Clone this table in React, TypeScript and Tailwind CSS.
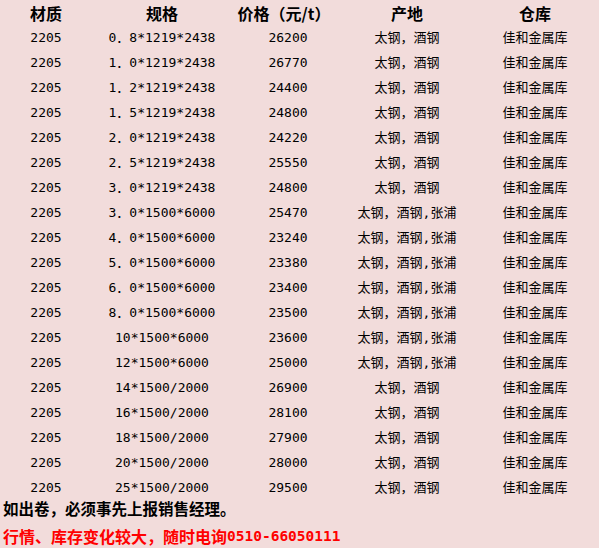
const rows: [string, string, string, string][] = [
  ["0．8*1219*2438", "26200", "太钢，酒钢", "佳和金属库"],
  ["1．0*1219*2438", "26770", "太钢，酒钢", "佳和金属库"],
  ["1．2*1219*2438", "24400", "太钢，酒钢", "佳和金属库"],
  ["1．5*1219*2438", "24800", "太钢，酒钢", "佳和金属库"],
  ["2．0*1219*2438", "24220", "太钢，酒钢", "佳和金属库"],
  ["2．5*1219*2438", "25550", "太钢，酒钢", "佳和金属库"],
  ["3．0*1219*2438", "24800", "太钢，酒钢", "佳和金属库"],
  ["3．0*1500*6000", "25470", "太钢，酒钢,张浦", "佳和金属库"],
  ["4．0*1500*6000", "23240", "太钢，酒钢,张浦", "佳和金属库"],
  ["5．0*1500*6000", "23380", "太钢，酒钢,张浦", "佳和金属库"],
  ["6．0*1500*6000", "23400", "太钢，酒钢,张浦", "佳和金属库"],
  ["8．0*1500*6000", "23500", "太钢，酒钢,张浦", "佳和金属库"],
  ["10*1500*6000", "23600", "太钢，酒钢,张浦", "佳和金属库"],
  ["12*1500*6000", "25000", "太钢，酒钢,张浦", "佳和金属库"],
  ["14*1500/2000", "26900", "太钢，酒钢", "佳和金属库"],
  ["16*1500/2000", "28100", "太钢，酒钢", "佳和金属库"],
  ["18*1500/2000", "27900", "太钢，酒钢", "佳和金属库"],
  ["20*1500/2000", "28000", "太钢，酒钢", "佳和金属库"],
  ["25*1500/2000", "29500", "太钢，酒钢", "佳和金属库"],
];

const cols = "grid grid-cols-[92px_140px_104px_142px_114px]";

export default function App() {
  return (
    <div className="h-[548px] w-[599px] overflow-hidden bg-[#f2dcdb] text-black [font-family:'DejaVu_Sans_Mono','Noto_Sans_CJK_SC',monospace]">
      <div className={`${cols} h-[25px] items-center text-center text-[16px] font-bold [font-family:'Noto_Sans_CJK_SC',sans-serif]`}>
        <div>材质</div>
        <div>规格</div>
        <div>价格（元/t）</div>
        <div>产地</div>
        <div>仓库</div>
      </div>
      {rows.map((r, i) => (
        <div key={i} className={`${cols} h-[25px] items-center text-center text-[13px]`}>
          <div>2205</div>
          <div>{r[0]}</div>
          <div className="pl-[8px]">{r[1]}</div>
          <div>{r[2]}</div>
          <div>{r[3]}</div>
        </div>
      ))}
      <div className="flex h-[17px] items-center pl-[3px] text-[15.5px] font-bold leading-none [font-family:'Noto_Sans_CJK_SC',sans-serif]">
        如出卷，必须事先上报销售经理。
      </div>
      <div className="mt-[9px] flex h-[20px] items-center pl-[3px] text-[16px] font-bold leading-none text-[#ff0000] [font-family:'Noto_Sans_CJK_SC',sans-serif]">
        行情、库存变化较大，随时电询<span className="[font-family:'DejaVu_Sans_Mono',monospace] text-[14.5px]">0510-66050111</span>
      </div>
    </div>
  );
}
